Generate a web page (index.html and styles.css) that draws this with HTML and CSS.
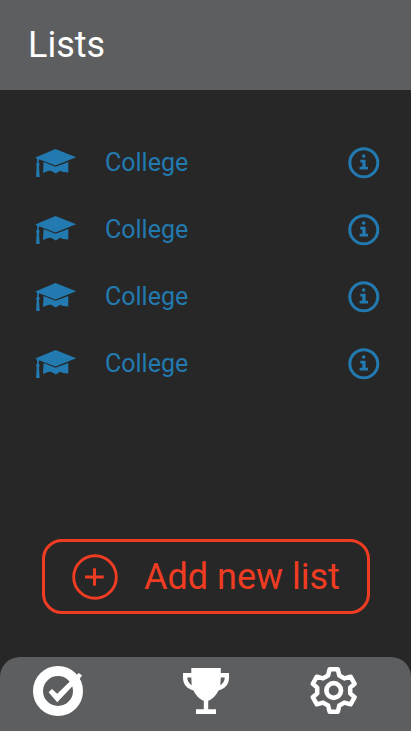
FILE: index.html
```html
<!DOCTYPE html>
<html lang="en">
<head>
<meta charset="utf-8">
<title>Lists</title>
<link rel="stylesheet" href="styles.css">
</head>
<body>
<svg class="defs" aria-hidden="true">
  <symbol id="cap" viewBox="35 148 42 31">
    <path d="M55.5 149 76.2 157.2 55.5 165.4 39.6 159.4 38.8 160V163A1.8 1.8 0 0 1 39 165.9L39.7 176.9H36.1L36.7 165.9A1.8 1.8 0 0 1 37.1 163V158.8L35.3 157.4Z"/>
    <path d="M43.6 162 55.5 166.7 68.3 162V172.6L63 171.9 60.2 170.8 55.7 173.4 51 170.8 48 171 43 172.9Z"/>
  </symbol>
  <symbol id="info" viewBox="348 147 32 32">
    <circle cx="363.8" cy="162.8" r="14" fill="none" stroke="currentColor" stroke-width="3"/>
    <circle cx="363.7" cy="156" r="1.8"/>
    <path d="M360.3 159.8H365.6V166.8H368V169.6H359.6V166.8H362.3V162.4H360.3Z"/>
  </symbol>
</svg>
<div class="app">
  <header class="header"><h1 class="title">Lists</h1></header>
  <main class="main">
    <ul class="lists">
      <li class="row"><svg class="cap"><use href="#cap"/></svg><span class="name">College</span><svg class="info"><use href="#info"/></svg></li>
      <li class="row"><svg class="cap"><use href="#cap"/></svg><span class="name">College</span><svg class="info"><use href="#info"/></svg></li>
      <li class="row"><svg class="cap"><use href="#cap"/></svg><span class="name">College</span><svg class="info"><use href="#info"/></svg></li>
      <li class="row"><svg class="cap"><use href="#cap"/></svg><span class="name">College</span><svg class="info"><use href="#info"/></svg></li>
    </ul>
    <button class="add">
      <svg class="plus" viewBox="72 554 46 46"><circle cx="95" cy="577" r="21.3"/><path d="M85 577H103.7M94.5 568.3V585.7"/></svg>
      <span>Add new list</span>
    </button>
  </main>
  <nav class="nav">
    <svg class="check" viewBox="32 664 52 54"><circle cx="58" cy="691" r="20" fill="none" stroke="#fff" stroke-width="10"/><path d="M48.6 692.2 52 688.9 57.2 693.7 76.6 674.9 78.8 673 82 675.6 80 678.2 57.2 702.2Z"/></svg>
    <svg class="trophy" viewBox="182 667 48 48"><path fill-rule="evenodd" d="M191.3 668H220.8V673H229V678C229 684.5 224.3 689.2 218.5 690.4C216.2 695.4 212.2 699.2 208.2 700.8V709.2H216V714H196V709.2H203.8V700.8C199.8 699.2 195.8 695.4 193.5 690.4C187.7 689.2 183 684.5 183 678V673H191.3ZM187.3 677.6C187.3 681 189 683.8 191.7 685.2L191.3 677.6ZM220.8 677.6 220.3 685.2C223 683.8 224.7 681 224.7 677.6Z"/></svg>
    <svg class="gear" viewBox="310 666 48 49"><g fill="none" stroke="#fff" stroke-linejoin="round"><circle cx="333.7" cy="690.5" r="7.3" stroke-width="4.7"/><path stroke-width="4.5" d="M329.6 669.3H337.8L339.3 675.5L344.4 678.4L350.6 676.7L354.6 683.8L350.2 687.6V693.4L354.6 697.2L350.6 704.3L344.4 702.6L339.3 705.5L337.8 711.7H329.6L328.1 705.5L323 702.6L316.8 704.3L312.8 697.2L317.2 693.4V687.6L312.8 683.8L316.8 676.7L323 678.4L328.1 675.5Z"/></g></svg>
  </nav>
</div>
</body>
</html>
```
FILE: styles.css
```css
* { box-sizing: border-box; margin: 0; padding: 0; }
body { background: #272727; font-family: Roboto, sans-serif; overflow: hidden; }
.defs { display: none; }
.app { width: 411px; height: 731px; display: flex; flex-direction: column; }
.header { height: 90px; padding-left: 28px; background: #5d5e60; display: flex; align-items: center; }
.title { color: #fff; font-size: 36px; font-weight: 400; line-height: 42px; }
.main { flex: 1; display: flex; flex-direction: column; padding-top: 39px; }
.lists { list-style: none; }
.row { height: 67px; padding: 0 31px 0 35px; display: flex; align-items: center; color: #227ab0; fill: currentColor; }
.cap { width: 42px; height: 31px; margin-top: 2px; }
.name { flex: 1; margin-left: 28px; font-size: 25px; line-height: 30px; }
.info { width: 32px; height: 32px; margin-top: 1px; }
.add { width: 328px; height: 75px; margin: 142px 0 0 42px; padding-left: 27px; display: flex; align-items: center; background: none; border: 3px solid #f03c22; border-radius: 20px; color: #f03c22; font: 36px/42px Roboto, sans-serif; white-space: nowrap; }
.plus { width: 46px; height: 46px; margin-right: 26px; fill: none; stroke: currentColor; stroke-width: 2.9; }
.nav { height: 74px; padding: 7px 0 0 32px; display: flex; align-items: flex-start; background: #5d5e60; border-radius: 20px 20px 0 0; fill: #fff; }
.check { width: 52px; height: 54px; }
.trophy { width: 48px; height: 48px; margin: 3px 80px 0 98px; }
.gear { width: 48px; height: 49px; margin-top: 2px; }
```
